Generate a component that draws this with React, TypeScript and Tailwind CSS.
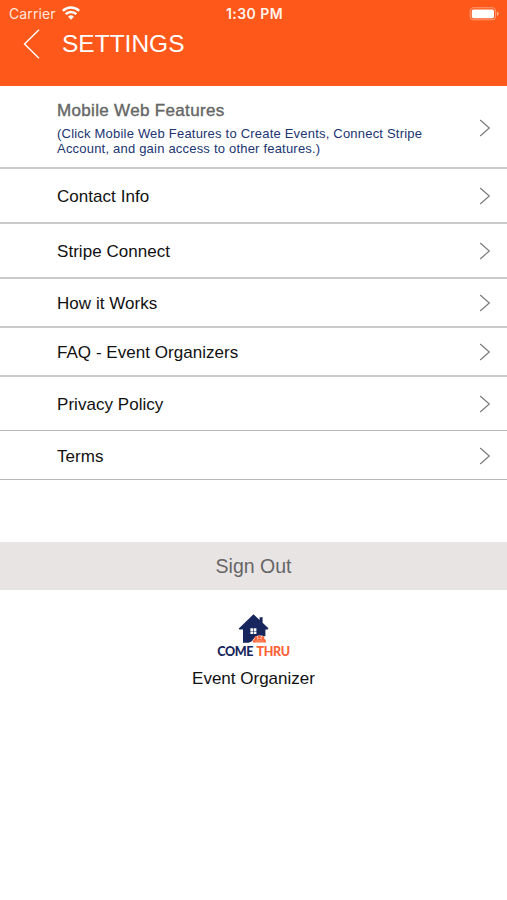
import clsx from "clsx";

const rows = [
  { label: "Contact Info", size: "h-[55px] border-b-2 border-[#cacaca]" },
  { label: "Stripe Connect", size: "h-[55px] border-b-2 border-[#cacaca]" },
  { label: "How it Works", size: "h-[49px] border-b-2 border-[#cacaca]" },
  { label: "FAQ - Event Organizers", size: "h-[49px] border-b-2 border-[#cacaca]" },
  { label: "Privacy Policy", size: "h-[54px] border-b border-[#b8b8b8]" },
  { label: "Terms", size: "h-[49px] border-b border-[#b8b8b8] pt-[2px]" },
];

function Chevron() {
  return (
    <svg className="h-[18px] w-3 shrink-0" viewBox="0 0 12 18" fill="none" stroke="#7b7b7b" strokeWidth="1.2">
      <path d="M1.2 1 10.3 9 1.2 17" />
    </svg>
  );
}

function WifiIcon() {
  return (
    <svg className="mb-0.5 h-[14px] w-[18px]" viewBox="0 0 18 14" fill="none" stroke="#fff" strokeWidth="2.5">
      <path d="M.8 4.9a11.7 11.7 0 0 1 16.4 0" />
      <path d="M3.7 8.2a7.6 7.6 0 0 1 10.6 0" />
      <path d="M6.1 10.8a4.1 4.1 0 0 1 5.8 0L9 13.8z" fill="#fff" stroke="none" />
    </svg>
  );
}

function BatteryIcon() {
  return (
    <svg className="mb-px h-[14px] w-[31px]" viewBox="0 0 31 14" fill="none">
      <rect x="1.2" y=".8" width="25.4" height="12" rx="3.6" stroke="#fff" strokeOpacity=".4" strokeWidth="1.1" />
      <rect x="2.8" y="2.4" width="22.2" height="8.8" rx="1.6" fill="#fff" />
      <path d="M28 4.8c2.2.4 2.2 3.6 0 4z" fill="#fff" fillOpacity=".5" />
    </svg>
  );
}

function HouseLogo() {
  return (
    <svg className="h-[30px] w-[32px]" viewBox="0 0 32 30">
      <path
        d="M15.5.3 21.6 6V3.3h3v5.5l5.8 5.5-.7 1.3h-2.3v6.6l-5 .2-5.2 3.4-6.5 3H5V15.6H1.2l-.4-1z"
        fill="#17265c"
      />
      <path d="M12.4 14.2h2.7v2.7h-2.7zM15.7 14.2h2.7v2.7h-2.7zM12.4 17.5h2.7v2.6h-2.7zM15.7 17.5h2.7v2.6h-2.7z" fill="#fff" />
      <path d="M13.8 29.6c.2-3 1.2-4.6 2.6-5.4 1.2-2 3-2.6 5-2.6s4.4.4 6 1.5v6.5z" fill="#fff" />
      <g fill="#fb6236">
        <circle cx="18" cy="23.5" r="1.5" />
        <circle cx="21.4" cy="22.8" r="1.6" />
        <circle cx="24.8" cy="23.5" r="1.5" />
        <path d="M14.7 28.4c.2-2.7 1.5-3.9 3.3-3.9h7.2c1.6 0 2.7 1.2 3 3.9z" />
      </g>
      <path d="M19.4 26v-1.4M23.4 26v-1.4M17.2 27h8.4" stroke="#ffd5c5" strokeWidth=".5" />
    </svg>
  );
}

export default function App() {
  return (
    <main className="h-[900px] w-[507px] overflow-hidden bg-white font-['Liberation_Sans',Arial,sans-serif] text-[17px] text-[#111]">
      <header className="h-[86px] bg-[#ff581b] text-white">
        <div className="grid h-7 grid-cols-3 items-center pr-[7px] pl-[9px] font-[Inter,sans-serif] text-sm">
          <div className="flex items-center gap-[6px]">
            <span className="tracking-[0.1px] text-[#ffe6db]">Carrier</span>
            <WifiIcon />
          </div>
          <span className="text-center text-[14px] font-semibold tracking-[0.45px] whitespace-nowrap text-[#fff3ed]">1:30 PM</span>
          <div className="flex justify-end">
            <BatteryIcon />
          </div>
        </div>
        <div className="flex h-8 items-center pl-[23px]">
          <svg className="h-[30px] w-[17px]" viewBox="0 0 17 30" fill="none" stroke="#fff" strokeWidth="1.4">
            <path d="M16 .8 1.5 15 16 29.2" />
          </svg>
          <h1 className="pl-[22px] text-[24.5px] leading-8">SETTINGS</h1>
        </div>
      </header>

      <nav>
        <div className="flex h-[83px] items-center justify-between border-b-2 border-[#cacaca] pt-[3px] pr-[16px] pl-[57px]">
          <div className="pb-px">
            <p className="text-[17px] leading-6 tracking-[0.33px] text-[#666] [-webkit-text-stroke:0.4px]">Mobile Web Features</p>
            <p className="w-[390px] pt-[3px] text-[13px] leading-[15px] tracking-[0.205px] text-[#203572]">
              (Click Mobile Web Features to Create Events, Connect Stripe
              <br />
              Account, and gain access to other features.)
            </p>
          </div>
          <Chevron />
        </div>
        {rows.map((row) => (
          <div key={row.label} className={clsx("flex items-center justify-between pr-[16px] pl-[57px]", row.size)}>
            <span className="pt-[2px] tracking-[0.04px]">{row.label}</span>
            <Chevron />
          </div>
        ))}
      </nav>

      <button className="mt-[62px] flex h-12 w-full items-center justify-center bg-[#e9e4e4] pt-0.5 text-[19.5px] text-[#666]">
        Sign Out
      </button>

      <footer className="flex flex-col items-center pt-6">
        <HouseLogo />
        <p className="pt-px font-[Lato,sans-serif] text-[12.5px] leading-[14px] font-black tracking-[-0.3px] text-[#17265c] [word-spacing:1px]">
          COME <span className="text-[#fb6236]">THRU</span>
        </p>
        <p className="pt-2 leading-6">Event Organizer</p>
      </footer>
    </main>
  );
}
